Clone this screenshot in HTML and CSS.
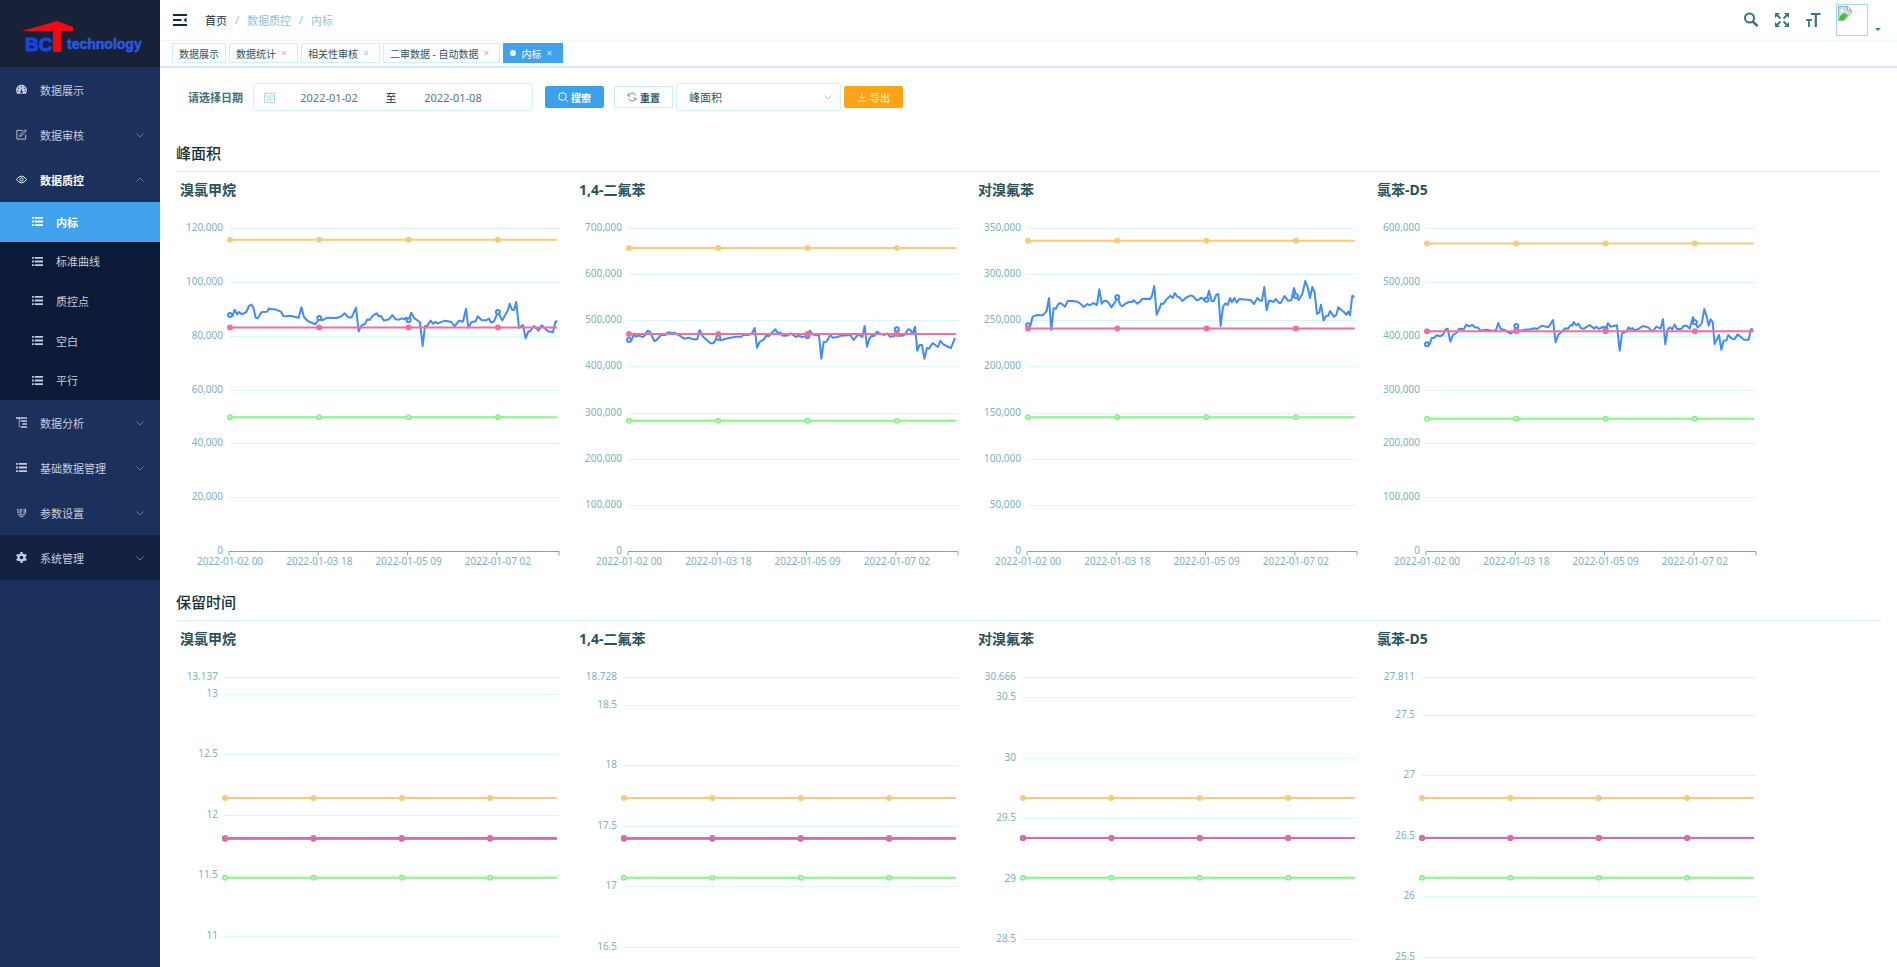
FILE: index.html
```html
<!DOCTYPE html>
<html lang="zh-CN">
<head>
  <meta charset="UTF-8">
  <meta name="viewport" content="width=device-width, initial-scale=1.0">
  <title>内标</title>
  <link rel="stylesheet" href="styles.css">
</head>
<body>

  <svg class="sprite" aria-hidden="true">
    <symbol id="i-list" viewBox="0 0 12 12">
      <path d="M0 1h2v2H0zM3 1h9v2H3zM0 5h2v2H0zM3 5h9v2H3zM0 9h2v2H0zM3 9h9v2H3z"/>
    </symbol>
    <symbol id="i-down" viewBox="0 0 8 8">
      <path d="M0.5 2.5L4 6l3.500-3.500" fill="none" stroke="currentColor"/>
    </symbol>
    <symbol id="i-up" viewBox="0 0 8 8">
      <path d="M0.5 5.500L4 2l3.500 3.500" fill="none" stroke="currentColor"/>
    </symbol>
  </svg>

  <div class="app">
    <aside class="sidebar">
      <a class="logo" href="#" aria-label="BCT technology">
        <svg viewBox="0 0 160 67">
          <text x="25" y="51" class="logo-bc">BC</text>
          <path d="M22 31L57 21l16 6v4H61v21h-8V31z" fill="#f00b12"/>
          <text x="67" y="49" class="logo-tech">technology</text>
        </svg>
      </a>
      <nav class="menu">
        <a href="#" class="menu-item">
          <svg class="icon" viewBox="0 0 12 12"><path fill-rule="evenodd" d="M1.200 10.500A6 6 0 1 1 10.800 10.500zM6 2.200a.7.7 0 1 0 .1 0zM2.800 3.800a.7.7 0 1 0 .1 0zM9.200 3.800a.7.7 0 1 0 .1 0zM1.800 6.800a.7.7 0 1 0 .1 0zM10.200 6.800a.7.7 0 1 0 .1 0zM6.200 4.500L5.300 7.500a1.300 1.300 0 1 0 1.400 0z"/></svg>
          <span>数据展示</span>
        </a>
        <a href="#" class="menu-item">
          <svg class="icon" viewBox="0 0 12 12"><path d="M7 1.500H1v9.500h9.500V6M4 8l.5-2L10 .8l1.300 1.300L6 7.500z" fill="none" stroke="currentColor"/></svg>
          <span>数据审核</span>
          <svg class="arrow"><use href="#i-down"/></svg>
        </a>
        <a href="#" class="menu-item open">
          <svg class="icon" viewBox="0 0 12 12"><path d="M.5 6Q6-1.500 11.500 6Q6 13.500.5 6z" fill="none" stroke="currentColor"/><circle cx="6" cy="6" r="1.700" fill="none" stroke="currentColor"/></svg>
          <span>数据质控</span>
          <svg class="arrow"><use href="#i-up"/></svg>
        </a>
        <div class="submenu">
          <a href="#" class="active"><svg class="icon"><use href="#i-list"/></svg><span>内标</span></a>
          <a href="#"><svg class="icon"><use href="#i-list"/></svg><span>标准曲线</span></a>
          <a href="#"><svg class="icon"><use href="#i-list"/></svg><span>质控点</span></a>
          <a href="#"><svg class="icon"><use href="#i-list"/></svg><span>空白</span></a>
          <a href="#"><svg class="icon"><use href="#i-list"/></svg><span>平行</span></a>
        </div>
        <a href="#" class="menu-item">
          <svg class="icon" viewBox="0 0 12 12"><path d="M0 1h12M5 4.300h7M7 7.600h5M5 11h7" stroke="currentColor" stroke-width="1.600"/><path d="M3.500 1v10" fill="none" stroke="currentColor" stroke-width=".8"/></svg>
          <span>数据分析</span>
          <svg class="arrow"><use href="#i-down"/></svg>
        </a>
        <a href="#" class="menu-item">
          <svg class="icon"><use href="#i-list"/></svg>
          <span>基础数据管理</span>
          <svg class="arrow"><use href="#i-down"/></svg>
        </a>
        <a href="#" class="menu-item">
          <svg class="icon" viewBox="0 0 12 12"><path d="M1 2.500h1.200V7M4 2.500h2.200v2H4.200v2h2.200M8 2.500h2.500v4H8M8 4.500h2.500M2 8.500h8M4 10.500h4" fill="none" stroke="currentColor"/></svg>
          <span>参数设置</span>
          <svg class="arrow"><use href="#i-down"/></svg>
        </a>
        <a href="#" class="menu-item hover">
          <svg class="icon" viewBox="0 0 12 12"><circle cx="6" cy="6" r="3.200" fill="none" stroke="currentColor" stroke-width="2.400"/><path d="M6 0v2M6 10v2M.8 3l1.700 1M9.500 8l1.700 1M.8 9l1.700-1M9.500 4l1.700-1" stroke="currentColor" stroke-width="2.600"/></svg>
          <span>系统管理</span>
          <svg class="arrow"><use href="#i-down"/></svg>
        </a>
      </nav>
    </aside>

    <div class="main">
      <header class="navbar">
        <button type="button" class="icon-btn" aria-label="收起菜单">
          <svg width="14" height="12" viewBox="0 0 14 12"><path d="M0 1h14M0 6h8.500M0 11h14" stroke="currentColor" stroke-width="1.800"/><path d="M13.500 3.500v5L10.500 6z"/></svg>
        </button>
        <nav class="breadcrumb">
          <a href="#">首页</a><i>/</i><span>数据质控</span><i>/</i><span>内标</span>
        </nav>
        <div class="tools">
          <button type="button" class="icon-btn" aria-label="搜索">
            <svg width="16" height="16" viewBox="0 0 16 16"><circle cx="6.500" cy="6" r="4.500" fill="none" stroke="currentColor" stroke-width="2"/><path d="M9.800 9.500l4.700 4.700" stroke="currentColor" stroke-width="2.600"/></svg>
          </button>
          <button type="button" class="icon-btn" aria-label="全屏">
            <svg width="16" height="16" viewBox="0 0 16 16"><path d="M1 1h5L1 6zM15 1v5l-5-5zM1 15v-5l5 5zM15 15h-5l5-5z"/><path d="M2 2l4.500 4.500M14 2L9.500 6.500M2 14l4.500-4.500M14 14L9.500 9.500" stroke="currentColor" stroke-width="1.800"/></svg>
          </button>
          <button type="button" class="icon-btn" aria-label="字号">
            <svg width="16" height="16" viewBox="0 0 16 16"><path d="M6 2h9.500M10.800 2v13" stroke="currentColor" stroke-width="2.200"/><path d="M1 7.800h6M4 7.800V15" stroke="currentColor" stroke-width="1.800"/></svg>
          </button>
          <button type="button" class="avatar" aria-label="用户">
            <svg width="14" height="15" viewBox="0 0 14 15"><path d="M.5.5h9l4 4v2L6 14.500H.5z" fill="#c6def4" stroke="#9aaec0"/><path d="M9.500.5v4h4z" fill="#fff" stroke="#9aaec0"/><circle cx="4" cy="4.500" r="1.500" fill="#fff"/><path d="M1 14l1-4 4-3 4 2-4 5z" fill="#47c22e"/></svg>
          </button>
          <span class="caret"></span>
        </div>
      </header>

      <div class="tags">
        <a href="#">数据展示</a>
        <a href="#">数据统计<b>×</b></a>
        <a href="#">相关性审核<b>×</b></a>
        <a href="#">二审数据 - 自动数据<b>×</b></a>
        <a href="#" class="current">内标<b>×</b></a>
      </div>

      <main class="content">
        <form class="filter">
          <label for="start">请选择日期</label>
          <div class="date-range">
            <svg width="11" height="11" viewBox="0 0 11 11"><path d="M.5 1.500h10v9H.5zM.5 4h10M3 0v2M8 0v2M2.500 6h6M2.500 8h6" fill="none" stroke="currentColor"/></svg>
            <input type="text" id="start" value="2022-01-02">
            <span>至</span>
            <input type="text" id="end" value="2022-01-08" aria-label="结束日期">
          </div>
          <button type="button" class="btn primary">
            <svg width="10" height="10" viewBox="0 0 10 10"><circle cx="4.500" cy="4.500" r="3.800" fill="none" stroke="currentColor"/><path d="M7.200 7.200L9.500 9.500" stroke="currentColor"/></svg>搜索
          </button>
          <button type="button" class="btn">
            <svg width="10" height="10" viewBox="0 0 10 10"><path d="M1.200 6.500A4 4 0 0 0 8.800 6M8.800 3.500A4 4 0 0 0 1.200 4M1 1.500V4h2.500M9 8.500V6H6.500" fill="none" stroke="#6f9aa4"/></svg>重置
          </button>
          <div class="select">
            <select aria-label="指标">
              <option>峰面积</option>
              <option>保留时间</option>
            </select>
            <svg class="arrow"><use href="#i-down"/></svg>
          </div>
          <button type="button" class="btn warning">
            <svg width="10" height="10" viewBox="0 0 10 10"><path d="M5 1v6M2.500 4.500L5 7l2.500-2.500M1 9h8" fill="none" stroke="currentColor"/></svg>导出
          </button>
        </form>

        <section>
          <h2>峰面积</h2>
          <div class="charts" id="area"></div>
        </section>
        <section>
          <h2>保留时间</h2>
          <div class="charts" id="retention"></div>
        </section>
      </main>
    </div>
  </div>

  <script src="charts.js"></script>
</body>
</html>
```
FILE: styles.css
```css
* {
  box-sizing: border-box;
}

body {
  margin: 0;
  font-family: "Noto Sans", "Noto Sans CJK SC", sans-serif;
  font-size: 11px;
  color: #2f5560;
  background: #fff;
}

a {
  color: inherit;
  text-decoration: none;
}

button,
input,
select {
  font: inherit;
  color: inherit;
}

svg {
  fill: currentColor;
  flex: none;
}

.sprite {
  display: none;
}

.app {
  display: flex;
  height: 100vh;
  overflow: hidden;
}

/* sidebar */
.sidebar {
  flex: none;
  width: 160px;
  background: #1c305c;
  color: #c8ccdc;
}

.logo {
  display: block;
  height: 67px;
  background: #182137;
}

.logo text {
  font-family: "Liberation Sans", sans-serif;
  font-weight: bold;
}

.logo-bc {
  font-size: 19px;
  fill: #1648e0;
  stroke: #1648e0;
}

.logo-tech {
  font-size: 14px;
  fill: #2a5ae0;
  stroke: #2a5ae0;
  stroke-width: 0.5;
}

.menu-item,
.submenu a {
  display: flex;
  align-items: center;
  gap: 13px;
  height: 45px;
  padding: 0 16px;
}

.menu-item .icon,
.submenu .icon {
  width: 11px;
  height: 11px;
}

.menu-item.open {
  color: #fff;
  font-weight: bold;
}

.menu-item.hover,
.menu-item:hover {
  background: #132243;
}

.arrow {
  width: 8px;
  height: 8px;
  margin-left: auto;
  color: #66779c;
}

.submenu {
  display: flex;
  flex-direction: column;
  height: 198px;
  background: #0c1a37;
}

.submenu a {
  flex: 1;
  padding-left: 32px;
}

.submenu a.active {
  background: #40a2ec;
  color: #fff;
  font-weight: bold;
}

/* top bar */
.main {
  flex: 1;
  min-width: 0;
  display: flex;
  flex-direction: column;
}

.navbar {
  flex: none;
  display: flex;
  align-items: center;
  height: 41px;
  padding: 0 16px 0 13px;
  border-bottom: 1px solid #ecf9fb;
}

.icon-btn {
  display: flex;
  padding: 0;
  border: 0;
  background: none;
  color: #3b7482;
}

.navbar > .icon-btn {
  color: #0c2d33;
}

.breadcrumb {
  display: flex;
  margin-left: 18px;
  color: #8fc4d2;
}

.breadcrumb a {
  color: #17333a;
}

.breadcrumb i {
  width: 20px;
  font-style: normal;
  text-align: center;
}

.tools {
  display: flex;
  align-items: center;
  gap: 15px;
  margin-left: auto;
}

.avatar {
  display: flex;
  width: 32px;
  height: 32px;
  padding: 1px;
  border: 1px solid #9cdde4;
  background: #fff;
}

.caret {
  align-self: flex-end;
  margin-bottom: 5px;
  margin-left: -8px;
  border: 3px solid transparent;
  border-top-color: #3b8494;
  border-bottom: 0;
}

.tags {
  flex: none;
  display: flex;
  gap: 3px;
  height: 27px;
  padding: 2px 12px 0;
  border-bottom: 2px solid #d5e9f9;
  font-size: 10px;
}

.tags a {
  display: flex;
  align-items: center;
  height: 20px;
  padding: 0 6px;
  border: 1px solid #d0f2f4;
}

.tags b {
  width: 16px;
  margin-right: -1px;
  font-weight: normal;
  text-align: center;
  color: #a0c4cc;
}

.tags .current {
  background: #40a2ec;
  border-color: #40a2ec;
  color: #fff;
}

.tags .current::before {
  content: "";
  width: 6px;
  height: 6px;
  margin-right: 5px;
  border-radius: 50%;
  background: #fff;
}

.tags .current b {
  color: #cde8ff;
}

/* content */
.content {
  flex: 1;
  min-height: 0;
  padding: 15px 16px;
  overflow-y: auto;
  scrollbar-width: none;
}

.filter {
  display: flex;
  align-items: center;
  height: 28px;
  padding-left: 12px;
  margin-bottom: 24px;
}

.filter label {
  margin-right: 10px;
  font-weight: bold;
  color: #3f7079;
}

.date-range {
  display: flex;
  align-items: center;
  width: 280px;
  height: 28px;
  padding-left: 10px;
  margin-right: 12px;
  border: 1px solid #d0f3f5;
  border-radius: 3px;
}

.date-range svg {
  color: #b5dce4;
}

.date-range input {
  width: 108px;
  padding: 0;
  border: 0;
  outline: 0;
  text-align: center;
  color: #507c88;
}

.date-range span {
  width: 16px;
  text-align: center;
  color: #17333a;
}

.btn {
  display: flex;
  align-items: center;
  justify-content: center;
  gap: 3px;
  width: 59px;
  height: 22px;
  padding: 0;
  border: 1px solid #c9eff3;
  border-radius: 2px;
  background: #fff;
  font-size: 10px;
  font-weight: bold;
}

.primary {
  margin-right: 10px;
  background: #3ba1ea;
  border-color: #3ba1ea;
  color: #fff;
}

.warning {
  background: #fba416;
  border-color: #fba416;
  color: #ffdf9c;
}

.select {
  display: flex;
  align-items: center;
  width: 165px;
  height: 28px;
  margin: 0 3px;
  padding-right: 8px;
  border: 1px solid #d0f3f5;
  border-radius: 3px;
}

.select select {
  flex: 1;
  padding: 0 0 0 12px;
  border: 0;
  outline: 0;
  appearance: none;
  background: none;
}

.select .arrow {
  color: #a9d5de;
}

h2 {
  height: 37px;
  margin: 0;
  border-bottom: 1px solid #d9f6f8;
  line-height: 36px;
  font-size: 15px;
  font-weight: 500;
  color: #17333a;
}

h3 {
  margin: 0;
  padding-left: 4px;
  line-height: 36px;
  font-size: 14px;
  color: #28525b;
}

section {
  margin-bottom: 12px;
}

.charts {
  display: flex;
}

.chart {
  width: 23.4%;
}

.chart svg {
  display: block;
  width: 100%;
}

.chart text {
  font-size: 10px;
  fill: #7ab3c0;
}

.grid {
  stroke: #dbf6fa;
}

.axis {
  stroke: #5bb4c2;
  fill: none;
}

.line {
  fill: none;
  stroke-width: 2;
  stroke-linejoin: round;
}

.dot {
  fill: #fff;
  stroke-width: 2;
}

.value {
  stroke: #3f8dfb;
}

.mean {
  stroke: #f56c9d;
}

.upper {
  stroke: #f9ca77;
}

.lower {
  stroke: #84f782;
}

.dot.mean {
  fill: #f56c9d;
}

.dot.upper {
  fill: #f9ca77;
}

#retention .mean {
  stroke: #e065ad;
}
```
FILE: charts.js
```js
const TOP = 20;
const HEIGHT = 323;
const RIGHT = 383;
const TIMES = ['2022-01-02 00', '2022-01-03 18', '2022-01-05 09', '2022-01-07 02'];

// trace: x y pairs in thirds of a unit, origin is the top left of the plot
const areaCharts = [
  {
    name: '溴氯甲烷', max: 120000, step: 20000, upper: 115600, mean: 83000, lower: 49700, origin: [208, 282],
    trace: '211 543 219 545 225 527 232 541 238 534 246 541 260 534 268 516 275 512 281 520 288 551 294 553 306 534 322 533 328 523 334 526 346 526 364 533 371 546 380 547 392 545 417 551 425 520 433 549 444 561 458 567 467 571 480 552 487 559 503 551 530 552 545 547 555 538 566 550 576 550 589 521 597 592 605 575 616 570 623 556 630 558 640 545 651 538 658 547 664 546 673 560 688 556 698 543 708 556 718 557 726 553 735 556 740 551 747 559 755 536 762 551 772 558 781 565 789 636 796 577 803 575 813 560 820 569 827 564 834 568 857 560 875 564 885 577 898 560 910 563 919 524 926 581 936 564 948 562 954 547 966 558 980 559 988 554 995 566 1003 562 1015 534 1028 560 1036 544 1043 533 1050 509 1057 527 1063 528 1070 504 1078 582 1090 573 1098 613 1106 592 1111 592 1123 576 1137 590 1146 574 1165 592 1180 595 1187 564 1193 561'
  },
  {
    name: '1,4-二氟苯', max: 700000, step: 100000, upper: 656500, mean: 470500, lower: 282000, origin: [206, 178],
    trace: '209 514 216 516 223 499 230 504 238 501 250 505 256 501 264 487 271 488 285 517 292 514 305 499 318 499 326 491 335 493 345 492 360 500 374 510 388 507 402 512 414 512 421 484 430 503 440 512 453 524 462 524 470 512 476 507 484 515 505 509 530 504 547 504 553 498 567 499 577 495 586 478 593 537 601 520 613 513 621 501 628 503 637 493 648 482 657 495 663 491 670 501 683 501 694 494 710 505 718 501 728 505 744 502 751 486 759 496 770 500 779 500 786 570 793 520 801 519 813 500 820 507 834 505 845 501 873 499 883 514 897 497 909 505 916 472 923 534 931 508 938 501 945 502 952 489 962 495 975 499 983 494 992 504 1003 503 1012 482 1018 501 1030 501 1038 497 1046 482 1053 483 1060 496 1067 474 1074 546 1081 529 1088 529 1095 570 1103 538 1109 540 1120 523 1136 535 1143 517 1152 527 1168 535 1175 538 1187 508'
  },
  {
    name: '对溴氟苯', max: 350000, step: 50000, upper: 336300, mean: 241000, lower: 145000, origin: [202, 178],
    trace: '205 470 212 472 219 444 233 439 249 440 261 427 268 388 275 484 282 419 289 420 296 406 303 403 316 414 324 397 340 397 353 399 362 405 372 415 383 406 391 410 400 403 412 409 419 362 426 405 433 397 440 396 448 404 455 416 463 405 474 386 482 409 488 413 496 406 510 399 517 400 522 395 533 405 540 400 548 391 559 390 571 392 577 381 584 352 591 438 599 420 605 404 611 406 620 393 632 381 640 388 645 373 654 385 660 386 668 397 682 385 694 380 702 384 709 394 716 394 725 387 733 393 741 393 748 366 756 398 762 397 770 378 776 376 783 472 790 415 797 404 804 409 811 388 817 401 824 388 831 402 839 391 873 394 883 406 893 388 901 396 907 396 914 355 921 425 928 396 935 397 942 400 948 391 957 402 963 403 975 382 985 396 995 395 1003 358 1010 382 1017 394 1028 376 1037 337 1044 355 1051 388 1058 355 1065 371 1072 436 1079 431 1084 408 1092 456 1099 442 1106 441 1111 427 1123 444 1130 438 1136 416 1155 432 1160 438 1166 429 1171 440 1178 381 1184 385'
  },
  {
    name: '氯苯-D5', max: 600000, step: 100000, upper: 571000, mean: 408300, lower: 245500, origin: [199, 178],
    trace: '203 527 210 526 216 508 224 507 231 500 241 503 250 498 257 483 264 480 272 519 280 499 290 493 299 480 312 482 320 468 328 473 338 469 346 476 355 477 363 486 380 483 402 487 409 484 416 463 423 481 433 483 442 489 453 495 462 488 470 472 479 488 494 483 513 482 524 479 532 481 547 471 565 476 571 469 580 454 588 521 596 498 606 489 617 479 625 480 633 469 638 471 642 460 650 470 656 465 664 479 673 480 690 469 704 480 710 474 718 481 731 474 738 482 745 463 752 474 772 470 780 546 787 494 800 489 807 476 812 482 818 478 824 485 838 480 850 472 867 477 876 488 883 484 890 474 903 480 910 452 917 527 924 483 931 476 938 482 945 467 952 481 965 481 973 471 981 471 990 480 1000 446 1007 461 1014 477 1026 465 1034 421 1041 443 1047 471 1053 452 1059 460 1065 526 1078 499 1085 543 1092 516 1100 515 1106 499 1114 508 1125 512 1134 497 1153 513 1167 513 1174 482 1180 482'
  }
];

const retentionCharts = [
  { name: '溴氯甲烷', max: 13.137, first: 13, offset: 0.008 },
  { name: '1,4-二氟苯', max: 18.728, first: 18.5, offset: 0.008 },
  { name: '对溴氟苯', max: 30.666, first: 30.5, offset: 0 },
  { name: '氯苯-D5', max: 27.811, first: 27.5, offset: 0 }
];

function drawChart(target, chart) {
  const { left, min, max } = chart;
  const y = v => TOP + (max - v) / (max - min) * HEIGHT;
  let out = '';

  chart.ticks.forEach(t => {
    const ty = Math.round(y(t)) + 0.5;
    out += `<path class="grid" d="M${left} ${ty}H${RIGHT}"/>`;
    out += `<text x="${left - 6}" y="${ty + 3}" text-anchor="end">${t.toLocaleString('en-US')}</text>`;
  });

  const bottom = TOP + HEIGHT + 0.5;
  const ticks = TIMES.map((t, i) => left + i * chart.interval);
  out += `<path class="axis" d="M${left} ${bottom}H${RIGHT}${[...ticks, RIGHT].map(x => `M${x} ${bottom}v4`).join('')}"/>`;
  TIMES.forEach((t, i) => {
    out += `<text x="${ticks[i] + 1}" y="${bottom + 14}" text-anchor="middle">${t}</text>`;
  });

  const dots = (cls, at) => ticks.map(x => `<circle class="dot ${cls}" cx="${x + 1}" cy="${at(x + 1)}" r="2"/>`).join('');
  out += `<polyline class="line value" points="${chart.points.map(p => p.join()).join(' ')}"/>`;
  out += dots('value', x => chart.points.reduce((a, b) => Math.abs(b[0] - x) < Math.abs(a[0] - x) ? b : a)[1]);

  ['mean', 'upper', 'lower'].forEach(key => {
    const ly = y(chart[key]);
    out += `<path class="line ${key}" d="M${left + 1} ${ly}H${RIGHT - 2}"/>` + dots(key, () => ly);
  });

  const box = document.createElement('div');
  box.className = 'chart';
  box.innerHTML = `<h3>${chart.name}</h3><svg viewBox="0 0 399 364">${out}</svg>`;
  target.appendChild(box);
}

areaCharts.forEach(c => {
  const n = c.trace.split(' ').map(Number);
  c.left = 53;
  c.min = 0;
  c.interval = 89.3;
  c.ticks = [];
  for (let t = 0; t <= c.max; t += c.step) c.ticks.push(t);
  c.points = [];
  for (let i = 0; i < n.length; i += 2) {
    c.points.push([c.left + (n[i] - c.origin[0]) / 3, TOP + (n[i + 1] - c.origin[1]) / 3]);
  }
  drawChart(document.getElementById('area'), c);
});

retentionCharts.forEach(c => {
  c.left = 48;
  c.min = c.max - 2.67;
  c.interval = 88.4;
  c.upper = c.max - 1;
  c.mean = c.max - 1.33;
  c.lower = c.max - 1.66;
  c.ticks = [c.max];
  for (let t = c.first; t > c.min; t -= 0.5) c.ticks.push(t);
  const my = TOP + (1.33 + c.offset) / 2.67 * HEIGHT;
  c.points = [[c.left + 1, my], [RIGHT - 2, my]];
  drawChart(document.getElementById('retention'), c);
});
```
